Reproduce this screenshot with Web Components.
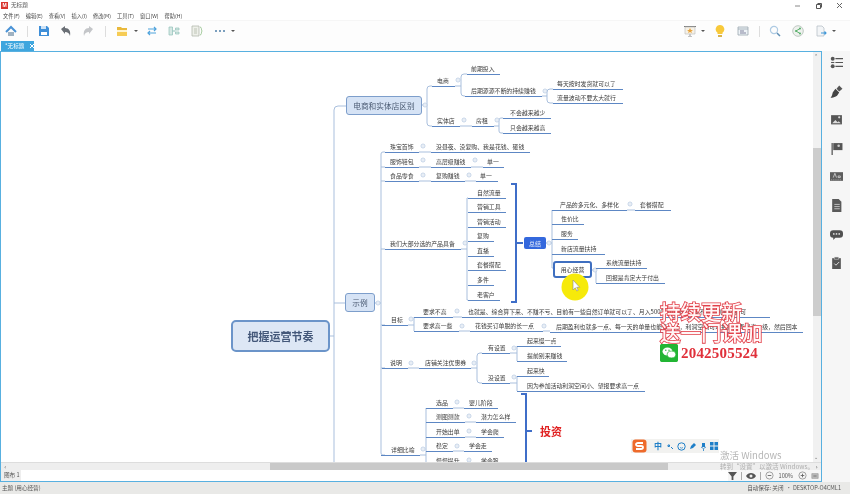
<!DOCTYPE html>
<html lang="zh">
<head>
<meta charset="utf-8">
<title>无标题</title>
<style>
  html, body { margin: 0; height: 494px; overflow: hidden; background: #fff; }
  body { font-family: "Noto Sans CJK SC", "Liberation Sans", sans-serif; color: #444; }
</style>
</head>
<body>
<app-shell>
  <title-bar slot="title">无标题</title-bar>
  <menu-bar slot="menu"></menu-bar>
  <tool-bar slot="tools"></tool-bar>
  <tab-strip slot="tabs">*无标题</tab-strip>
  <editor-pane slot="editor"><mind-canvas></mind-canvas></editor-pane>
  <side-rail slot="rail"></side-rail>
  <status-bar slot="status"></status-bar>
  <screen-overlay slot="overlay"></screen-overlay>
</app-shell>

<script>
const ICONS = {
  home: '<path d="M1 7 6 2l5 5" fill="none" stroke="#4a93d6" stroke-width="2"/><path d="M3 7h6v4H3z" fill="#9fb2c2"/>',
  save: '<path d="M1 1h8l2 2v8H1z" fill="#3f8fd8"/><path d="M3 1h5v3H3z" fill="#cfe3f6"/><path d="M3 7h6v3H3z" fill="#fff"/>',
  undo: '<path d="M1 4 5 1v2c4 0 6 3 5 8-1-3-2-4-5-4v2z" fill="#6a6f75"/>',
  redo: '<path d="M11 4 7 1v2c-4 0-6 3-5 8 1-3 2-4 5-4v2z" fill="#c4c6c9"/>',
  folder: '<path d="M1 2h4l1 1h5v2H1z" fill="#e9b93c"/><path d="M1 5h10v2H1z" fill="#fff4cf"/><path d="M1 7h10v4H1z" fill="#f6cc55"/>',
  swap: '<path d="M2 4h8M8 2l2 2-2 2M10 8H2M4 6 2 8l2 2" fill="none" stroke="#4fa3dc" stroke-width="1.200"/>',
  map: '<path d="M1 2h3.500v8H1zM7.500 3H11v2H7.500zM7.500 7H11v2H7.500z" fill="#d6e8e4" stroke="#8fc0b8" stroke-width=".7"/><path d="M4.500 6h3" stroke="#8fc0b8"/>',
  sheet: '<path d="M1 1h7v10H1z" fill="#eef0ea" stroke="#b3b9ad" stroke-width=".8"/><path d="M3 4h3M3 6h3M3 8h3" stroke="#a9b3a0" stroke-width=".7"/><path d="M9 2c2 0 1 3 2 4-1 1 0 4-2 4" fill="none" stroke="#8fbf86" stroke-width=".8"/>',
  dots: '<circle cx="2" cy="6" r="1" fill="#4f7fa8"/><circle cx="6" cy="6" r="1" fill="#4f7fa8"/><circle cx="10" cy="6" r="1" fill="#4f7fa8"/>',
  show: '<path d="M0 1h12v1H0z" fill="#7d7d7d"/><path d="M1 2h10v7H1z" fill="#f6f1e6" stroke="#b8b8b8" stroke-width=".6"/><path d="M6 3l1 2h2L7.300 6.300 8 8 6 7 4 8l.7-1.700L3 5h2z" fill="#e9a33a"/><path d="M6 9v2M4 12l2-1 2 1" stroke="#8d8d8d" stroke-width=".7" fill="none"/>',
  bulb: '<path d="M6 0a4.300 4.300 0 0 1 2.500 7.800V9h-5V7.800A4.300 4.300 0 0 1 6 0z" fill="#f8c93a"/><path d="M4 10h4v2H4z" fill="#d9b34a"/>',
  note: '<path d="M1 2h10v8H1z" fill="#eef3f7" stroke="#9aa6ae" stroke-width=".8"/><path d="M1 4h10" stroke="#9aa6ae" stroke-width=".8"/><path d="M3 6h4M3 8h6" stroke="#557" stroke-width=".7"/>',
  search: '<circle cx="5" cy="5" r="3.600" fill="none" stroke="#aecbe3" stroke-width="1.200"/><path d="M8 8l3 3" stroke="#5f8fb5" stroke-width="1.500"/>',
  share: '<circle cx="6" cy="6" r="5.300" fill="#eef1ee" stroke="#b9c4bc" stroke-width=".9"/><path d="M8 3.500 4 6l4 2.500" fill="none" stroke="#58b06a"/><circle cx="8" cy="3.500" r="1" fill="#58b06a"/><circle cx="4" cy="6" r="1" fill="#58b06a"/><circle cx="8" cy="8.500" r="1" fill="#58b06a"/>',
  export: '<path d="M2 1h5l2 2v8H2z" fill="#f3f5f7" stroke="#b8c0c8" stroke-width=".8"/><path d="M6 8h5M9.500 6.500 11 8 9.500 9.500" fill="none" stroke="#3f97d8" stroke-width="1.100"/>',
  list: '<circle cx="2.500" cy="2.500" r="1.800" fill="#555"/><circle cx="2.500" cy="9.500" r="1.800" fill="#555"/><path d="M5 2.500h7M5 6h7M5 9.500h7" stroke="#555" stroke-width="1.100"/><path d="M1 6h3" stroke="#555"/>',
  brush: '<path d="M8.500 .5l3 3-3 2.500-2.500-2.500z" fill="#555"/><path d="M5 3.500 8.500 7 6.500 10c-2 1.500-4.500 2-6 1.500C2 10.500 2 9 2.500 7z" fill="#444"/>',
  image: '<path d="M1 2h10v8.500H1z" fill="#555"/><path d="M2 9.500l3-3 2 2 1-1 2 2z" fill="#ddd"/><circle cx="8.500" cy="4" r="1" fill="#ddd"/>',
  flag: '<path d="M2 1v11" stroke="#666" stroke-width="1.300"/><path d="M3 1h8.500v6.500H3z" fill="#555"/><circle cx="8" cy="3.500" r="1.200" fill="#ccc"/>',
  tag: '<path d="M0 2h12v8H0z" fill="#5d5d5d"/><path d="M1 9h10" stroke="#ccc" stroke-width=".5" stroke-dasharray="1 1"/><path d="M3 7l1.500-4L6 7M7.500 5.500h2v1.500h-2z" stroke="#ddd" stroke-width=".7" fill="none"/>',
  doc: '<path d="M2 0h6l2.500 2.500V12H2z" fill="#5a5a5a"/><path d="M4 5h5M4 7h5M4 9h5" stroke="#ddd" stroke-width=".7"/>',
  comment: '<path d="M3 2h6a3 3 0 0 1 3 3v1a3 3 0 0 1-3 3H5l-2 2V9a3 3 0 0 1-3-3V5a3 3 0 0 1 3-3z" fill="#505050"/><circle cx="3.500" cy="5.500" r=".8" fill="#ddd"/><circle cx="6" cy="5.500" r=".8" fill="#ddd"/><circle cx="8.500" cy="5.500" r=".8" fill="#ddd"/>',
  clip: '<path d="M2 2h8v10H2z" fill="#555"/><path d="M4 1h4v2H4z" fill="#555" stroke="#ddd" stroke-width=".5"/><path d="M4 7l1.500 1.500L8.500 5.500" fill="none" stroke="#ddd" stroke-width=".9"/>',
  filter: '<path d="M0 1h10L6 6v4H4V6z" fill="#555"/>',
  eye: '<path d="M0 5c2-4 8-4 10 0-2 4-8 4-10 0z" fill="#555"/><circle cx="5" cy="5" r="1.500" fill="#eee"/>',
  minus: '<circle cx="5" cy="5" r="4" fill="none" stroke="#999"/><path d="M3 5h4" stroke="#666"/>',
  plus: '<circle cx="5" cy="5" r="4" fill="none" stroke="#999"/><path d="M3 5h4M5 3v4" stroke="#666"/>',
  fit: '<path d="M1 2h8v6H1z" fill="#bbb" stroke="#888" stroke-width=".6"/><path d="M3 5h4" stroke="#666"/>'
}

class UiIcon extends HTMLElement {
  connectedCallback() {
    const size = this.getAttribute('size') || 12
    const box = this.getAttribute('box') || 12
    this.attachShadow({ mode: 'open' }).innerHTML = `
      <style>:host { display: block; width: ${size}px; height: ${size}px; flex: none; } svg { display: block; }</style>
      <svg width="${size}" height="${size}" viewBox="0 0 ${box} ${box}">${ICONS[this.getAttribute('name')] || ''}</svg>`
  }
}
customElements.define('ui-icon', UiIcon)

class AppShell extends HTMLElement {
  constructor() {
    super()
    this.attachShadow({ mode: 'open' }).innerHTML = `
      <style>
        :host { display: flex; flex-direction: column; position: relative; width: 850px; height: 494px; overflow: hidden; background: #fdfdfd; filter: blur(.3px); }
        .work { display: flex; height: 431px; }
      </style>
      <slot name="title"></slot>
      <slot name="menu"></slot>
      <slot name="tools"></slot>
      <slot name="tabs"></slot>
      <div class="work"><slot name="editor"></slot><slot name="rail"></slot></div>
      <slot name="status"></slot>
      <slot name="overlay"></slot>`
  }
}
customElements.define('app-shell', AppShell)

class TitleBar extends HTMLElement {
  constructor() {
    super()
    this.attachShadow({ mode: 'open' }).innerHTML = `
      <style>
        :host { display: flex; align-items: center; height: 10px; background: #fff; font-size: 5.600px; color: #555; padding-left: 1px; }
        .logo { width: 7px; height: 7px; background: #d9352f; color: #fff; font: bold 5px/7px "Liberation Sans", sans-serif; text-align: center; margin-right: 3px; }
        .win { margin-left: auto; display: flex; align-items: center; gap: 14px; padding-right: 7px; }
        .win svg { display: block; }
      </style>
      <span class="logo">M</span><slot></slot>
      <div class="win">
        <svg width="7" height="7"><path d="M1 4h5" stroke="#888"/></svg>
        <svg width="7" height="7"><path d="M1.500 2.500h4v4h-4z" fill="none" stroke="#555"/><path d="M2.500 1.500h4v4" fill="none" stroke="#555"/></svg>
        <svg width="7" height="7"><path d="M1 1l5 5M6 1 1 6" stroke="#666"/></svg>
      </div>`
  }
}
customElements.define('title-bar', TitleBar)

class MenuBar extends HTMLElement {
  constructor() {
    super()
    const items = ['文件(F)', '编辑(E)', '查看(V)', '插入(I)', '修改(M)', '工具(T)', '窗口(W)', '帮助(H)']
    this.attachShadow({ mode: 'open' }).innerHTML = `
      <style>
        :host { display: flex; align-items: center; gap: 6px; height: 10px; padding-left: 3px; background: #fff; font-size: 5.200px; color: #444; white-space: nowrap; }
      </style>
      ${items.map(t => `<span>${t}</span>`).join('')}`
  }
}
customElements.define('menu-bar', MenuBar)

class ToolBar extends HTMLElement {
  constructor() {
    super()
    const ic = (n, m) => `<ui-icon name="${n}" style="margin-left:${m}px"></ui-icon>`
    const sep = m => `<i class="sep" style="margin-left:${m}px"></i>`
    const caret = m => `<i class="caret" style="margin-left:${m}px"></i>`
    this.attachShadow({ mode: 'open' }).innerHTML = `
      <style>
        :host { display: flex; align-items: center; height: 21px; padding: 0 12px 0 5px; background: #fdfdfd; border-top: 1px solid #f6f6f6; box-sizing: border-box; }
        .sep { width: 1px; height: 11px; background: #ddd; flex: none; }
        .caret { width: 0; height: 0; border: 2px solid transparent; border-top: 2.500px solid #555; border-bottom: 0; flex: none; box-sizing: content-box; margin-right: 2px; }
        .right { margin-left: auto; display: flex; align-items: center; }
      </style>
      ${ic('home', 0)}${sep(10)}${ic('save', 10)}${ic('undo', 10)}${ic('redo', 10)}${sep(11)}${ic('folder', 10)}${caret(6)}${ic('swap', 6)}${ic('map', 10)}${ic('sheet', 11)}${ic('dots', 11)}${caret(5)}
      <div class="right">
        ${ic('show', 0)}${caret(5)}${ic('bulb', 7)}${ic('note', 11)}${sep(10)}${ic('search', 9)}${ic('share', 11)}${ic('export', 11)}${caret(5)}
      </div>`
  }
}
customElements.define('tool-bar', ToolBar)

class TabStrip extends HTMLElement {
  constructor() {
    super()
    this.attachShadow({ mode: 'open' }).innerHTML = `
      <style>
        :host { display: flex; align-items: flex-end; height: 10px; padding-left: 1px; background: #fdfdfd; }
        .tab { display: flex; align-items: center; width: 33px; height: 10px; box-sizing: border-box; padding-left: 4px; background: #3fa6de; color: #fff; font-size: 5.600px; line-height: 10px; white-space: nowrap; }
        svg { margin-left: 5px; flex: none; }
      </style>
      <div class="tab"><slot></slot><svg width="6" height="6"><path d="M1 1l4 4M5 1 1 5" stroke="#fff"/></svg></div>`
  }
}
customElements.define('tab-strip', TabStrip)

class EditorPane extends HTMLElement {
  constructor() {
    super()
    this.attachShadow({ mode: 'open' }).innerHTML = `
      <style>
        :host { display: flex; flex-direction: column; width: 822px; height: 431px; box-sizing: border-box; border: solid #58b0e0; border-width: 1px 1.500px 1.500px 1.500px; background: #fff; font-size: 5.600px; }
        .top { display: flex; height: 410px; }
        .canvas { flex: 1; min-width: 0; position: relative; overflow: hidden; }
        .vbar { width: 8px; position: relative; background: #f1f1f1; }
        .vbar b { position: absolute; left: 0; right: 0; top: 96px; height: 168px; background: #cdcdcd; }
        .vbar i { position: absolute; left: 1px; font: normal 5px/6px "DejaVu Sans", sans-serif; color: #666; }
        .hbar { display: flex; height: 8px; background: #eee; position: relative; border-top: 1px solid #ddd; box-sizing: border-box; }
        .hbar b { margin-left: 269px; width: 398px; background: #c9c9c9; }
        .hbar i { position: absolute; font: normal 6px/7px "DejaVu Sans", sans-serif; color: #555; }
        .sheets { display: flex; align-items: center; height: 11px; padding-left: 2px; background: #fff; color: #555; }
        .name { width: 17px; height: 100%; line-height: 11px; background: #eee; margin-left: -2px; padding-left: 3px; flex: none; box-sizing: content-box; }
        .tools { margin-left: auto; display: flex; align-items: center; background: #f6f6f6; height: 100%; padding: 0 2px 0 0; }
        .tools s { text-decoration: none; }
        .tools i { width: 1px; height: 8px; background: #aaa; margin: 0 4px; }
      </style>
      <div class="top">
        <div class="canvas"><slot></slot></div>
        <div class="vbar"><i style="top:1px">⌃</i><b></b><i style="bottom:2px">⌄</i></div>
      </div>
      <div class="hbar"><i style="left:3px;top:0">‹</i><b></b><i style="right:3px;top:0">›</i></div>
      <div class="sheets">
        <span class="name">图布 1</span>
        <div class="tools">
          <ui-icon name="filter" size="9" box="10"></ui-icon><i></i><ui-icon name="eye" size="10" box="10"></ui-icon><i></i>
          <ui-icon name="minus" size="9" box="10"></ui-icon><s style="margin:0 5px">100%</s><ui-icon name="plus" size="9" box="10"></ui-icon><ui-icon name="fit" size="8" box="10" style="margin-left:4px"></ui-icon>
        </div>
      </div>`
  }
}
customElements.define('editor-pane', EditorPane)

class SideRail extends HTMLElement {
  constructor() {
    super()
    const names = ['list', 'brush', 'image', 'flag', 'tag', 'doc', 'comment', 'clip']
    this.attachShadow({ mode: 'open' }).innerHTML = `
      <style>
        :host { display: flex; flex-direction: column; align-items: center; gap: 15.600px; width: 28px; padding-top: 5px; box-sizing: border-box; background: #f6f6f6; }
      </style>
      ${names.map(n => `<ui-icon name="${n}" size="13"></ui-icon>`).join('')}`
  }
}
customElements.define('side-rail', SideRail)

class StatusBar extends HTMLElement {
  constructor() {
    super()
    this.attachShadow({ mode: 'open' }).innerHTML = `
      <style>
        :host { display: flex; align-items: center; justify-content: space-between; height: 12px; padding: 0 9px 0 2px; background: #e9e9e7; font-size: 5.600px; color: #555; }
      </style>
      <span>主题 (用心经营)</span><span>自动保存: 关闭 &nbsp;• DESKTOP-O4CML1</span>`
  }
}
customElements.define('status-bar', StatusBar)

// one topic of the map: l/r = underline ends, u = underline y, p = text inset
class MindNode extends HTMLElement {
  connectedCallback() {
    const n = k => Number(this.getAttribute(k))
    const kind = this.getAttribute('kind') || 'line'
    let css
    if (kind === 'line') {
      css = `:host { position: absolute; left: ${n('l') - 1}px; top: ${n('u') - 63}px; width: ${n('r') - n('l')}px; height: 11px; box-sizing: content-box;
        border-bottom: 1.200px solid #5d87c4; padding: 0; font-size: 5.900px; line-height: 11px; color: #3a3a3a; white-space: nowrap; }
        span { display: block; padding-left: ${this.getAttribute('p') || 5}px; }`
    } else {
      const skins = {
        root: 'background:#dde7f5;border:2px solid #6b94c9;border-radius:5px;font-size:11px;font-weight:700;color:#44587a;',
        main: 'background:#d6e3f5;border:1px solid #7d9ecb;border-radius:3px;font-size:7.700px;color:#4a5a72;',
        accent: 'background:#3468dd;border-radius:2px;font-size:6px;color:#e8eefc;',
        selected: 'background:#fff;border:2px solid #3f6fc0;border-radius:3px;font-size:5.900px;color:#3a3a3a;'
      }
      css = `:host { position: absolute; left: ${n('x') - 1}px; top: ${n('y') - 52}px; width: ${n('w')}px; height: ${n('h')}px; box-sizing: border-box;
        display: flex; align-items: center; justify-content: center; white-space: nowrap; ${skins[kind]} }`
    }
    this.attachShadow({ mode: 'open' }).innerHTML = `<style>${css}</style><span><slot></slot></span>`
  }
}
customElements.define('mind-node', MindNode)

const LINES = [
  [467,74,500,'前期投入',4], [432,86,455,'电商',5], [465,96,542,'后期源源不断的持续赚钱',6],
  [553,89,623,'每天按时发货就可以了',4], [553,103,623,'流量波动不要太大就行',4],
  [432,126,460,'实体店',5], [472,126,494,'房租',4], [503,118,551,'不会越来越少',7], [503,133,551,'只会越来越高',7],
  [385,152,419,'珠宝首饰',5], [431,152,530,'没昼夜、没复购、我是花钱、砸钱',5],
  [385,167,419,'服饰鞋包',5], [431,167,471,'高层级赚钱',5], [483,167,504,'单一',4],
  [385,181,419,'食品零食',5], [431,181,465,'复购赚钱',5], [476,181,498,'单一',4],
  [385,249,461,'我们大部分选的产品具备',5],
  [468,198,506,'自然流量',9], [468,212,506,'营销工具',9], [468,227,506,'营销活动',9], [468,241,494,'复购',9],
  [468,256,494,'直播',9], [468,270,506,'套餐搭配',9], [468,285,494,'多件',9], [468,300,500,'老客户',9],
  [552,210,627,'产品的多元化、多样化',8], [635,210,671,'套餐搭配',5], [552,224,584,'性价比',9],
  [552,239,578,'服务',9], [552,254,605,'新店流量扶持',9],
  [596,268,647,'系统流量扶持',10], [596,283,665,'回报是肯定大于付出',10],
  [382,325,408,'目标',9], [414,317,453,'要求不高',9], [414,331,459,'要求高一些',9],
  [462,317,770,'也就是、综合算下来、不赚不亏、目前有一些自然订单就可以了、月入5000（小目标）差不多做到超级即可',6],
  [470,331,543,'花钱买订单脱的长一点',5],
  [550,332,803,'后期盈利也就多一点、每一天的单量也能多一点，利润空间可以把质量再提高一级，然后回本',6],
  [382,368,408,'说明',8], [419,368,471,'店铺关注优惠券',6],
  [482,353,510,'有设置',6], [482,383,510,'没设置',6],
  [517,346,561,'起来慢一点',10], [517,361,567,'提前别来赚钱',10], [517,376,549,'起来快',10],
  [517,391,645,'因为参加活动利润空间小、望报要求高一点',10],
  [381,455,420,'详细比喻',10],
  [426,408,453,'选品',10], [464,408,498,'婴儿阶段',5],
  [426,422,465,'测图测款',10], [476,422,516,'潜力怎么样',5],
  [426,437,465,'开始出单',10], [476,437,504,'学会爬',5],
  [426,451,453,'稳定',10], [464,451,492,'学会走',5],
  [426,466,465,'慢慢提升',10], [476,466,504,'学会跑',5]
]

const LINKS = [
  'M330 336H334', 'M334 470V110Q334 106 338 106H346', 'M334 303H345',
  'M422 105H427', 'M432 86H430Q427 86 427 89V123Q427 126 430 126H432',
  'M455 86H461', 'M467 74H464Q461 74 461 77V93Q461 96 464 96H465',
  'M542 96H547', 'M553 89H550Q547 89 547 92V100Q547 103 550 103H553',
  'M460 126H472', 'M494 126H499', 'M503 118H501Q499 118 499 120V131Q499 133 501 133H503',
  'M375 303H381', 'M385 152H383Q381 152 381 154V453Q381 455 383 455H385',
  'M381 167H385', 'M381 181H385', 'M381 249H385', 'M381 325H385', 'M381 368H385',
  'M419 152H431', 'M419 167H431', 'M471 167H483', 'M419 181H431', 'M465 181H476',
  'M461 249H467', 'M468 198H467V300H468',
  'M546 243H552', 'M552 210V254', 'M552 254V268H553', 'M627 210H635',
  'M592 270H596', 'M596 268V283',
  'M408 325H414', 'M414 317V331', 'M453 317H462', 'M459 331H470', 'M543 331H550',
  'M408 368H419', 'M471 368H477', 'M482 353H480Q477 353 477 356V380Q477 383 480 383H482',
  'M510 353H517', 'M517 346V361', 'M510 383H517', 'M517 376V391',
  'M420 455H426', 'M426 408V470', 'M453 408H464', 'M465 422H476', 'M465 437H476', 'M453 451H464'
]

const DOTS = [
  [425,105],[458,80],[545,91],[464,120],[497,120],[423,146],[423,160],[475,160],[423,175],[469,175],
  [465,243],[549,243],[595,270],[630,204],[378,303],[411,319],[457,311],[462,326],[544,326],
  [411,363],[474,363],[514,348],[514,377],[457,402],[469,416],[469,431],[457,446],[469,460],[423,449]
]

class MindCanvas extends HTMLElement {
  constructor() {
    super()
    const dots = DOTS.map(([x, y]) => `<circle cx="${x}" cy="${y}" r="2" fill="#fff" stroke="#b4c6df" stroke-width=".8"/><path d="M${x - 1} ${y}h2" stroke="#b4c6df" stroke-width=".6"/>`).join('')
    const rows = LINES.map(([l, u, r, t, p]) => `<mind-node l="${l}" u="${u}" r="${r}" p="${p}">${t}</mind-node>`).join('')
    this.attachShadow({ mode: 'open' }).innerHTML = `
      <style>
        :host { display: block; position: absolute; inset: 0; }
        .links { position: absolute; left: -1px; top: -52px; }
        .invest { position: absolute; left: 539px; top: 370px; font-size: 11px; font-weight: 700; color: #e02020; line-height: 18px; }
      </style>
      <svg class="links" width="850" height="494">
        <path d="${LINKS.join('')}" fill="none" stroke="#a9bfdd" stroke-width="1"/>
        <path d="M511 184H516V302H511M516 243H523M521 394H526V470M526 431H532" fill="none" stroke="#3f6ec8" stroke-width="2"/>
        ${dots}
      </svg>
      ${rows}
      <mind-node kind="root" x="231" y="320" w="99" h="32">把握运营节奏</mind-node>
      <mind-node kind="main" x="346" y="96" w="76" h="19">电商和实体店区别</mind-node>
      <mind-node kind="main" x="345" y="293" w="30" h="19">示例</mind-node>
      <mind-node kind="accent" x="524" y="237" w="22" h="12">总结</mind-node>
      <mind-node kind="selected" x="553" y="261" w="39" h="17">用心经营</mind-node>
      <span class="invest">投资</span>
      <svg class="links" width="850" height="494">
        <circle cx="575" cy="287" r="13.500" fill="#f6ea0a"/>
        <path d="M573 280v10l2.300-2.200 1.500 3.200 1.400-.7-1.500-3h3z" fill="#fff" stroke="#888" stroke-width=".6"/>
      </svg>`
  }
}
customElements.define('mind-canvas', MindCanvas)

class ScreenOverlay extends HTMLElement {
  constructor() {
    super()
    this.attachShadow({ mode: 'open' }).innerHTML = `
      <style>
        :host { display: block; position: absolute; inset: 0; pointer-events: none; }
        .promo { position: absolute; left: 660px; top: 301px; display: flex; flex-direction: column; }
        .big { font-size: 20.500px; line-height: 20.500px; font-weight: 500; color: #fff6f6; -webkit-text-stroke: 1.700px #e2404a; paint-order: stroke fill; white-space: nowrap; }
        .num { display: flex; align-items: center; gap: 3px; margin-top: 2px; font: 700 15px/18px "Liberation Serif", serif; color: #e0303a; letter-spacing: .2px; }
        .wx { width: 18px; height: 18px; border-radius: 2px; background: #22b534; display: block; }
        .ime { position: absolute; left: 631px; top: 439px; width: 88px; height: 14px; display: flex; align-items: center; gap: 3px; background: #f2f2f0; box-sizing: border-box; padding-left: 1px; }
        .ime svg { display: block; flex: none; }
        .ime b { font-size: 8px; color: #1f7fc8; margin: 0 2px 0 4px; line-height: 10px; }
        .act { position: absolute; color: rgba(120,120,120,.55); white-space: nowrap; }
      </style>
      <div class="promo">
        <div class="big">持续更新</div>
        <div class="big">送一门课加</div>
        <div class="num">
          <svg class="wx" viewBox="0 0 18 18"><rect width="18" height="18" rx="2" fill="#22b534"/><ellipse cx="7.500" cy="7.500" rx="5" ry="4" fill="#fff"/><ellipse cx="11.500" cy="10.500" rx="4.300" ry="3.400" fill="#fff" stroke="#22b534" stroke-width=".7"/><circle cx="5.800" cy="6.300" r=".7" fill="#22b534"/><circle cx="9" cy="6.300" r=".7" fill="#22b534"/></svg>
          2042505524
        </div>
      </div>
      <div class="ime">
        <svg width="15" height="14" viewBox="0 0 15 14"><rect x=".5" y=".5" width="14" height="13" rx="3" fill="#ee6a2b"/><path d="M11 4H6Q4 4 4 5.500T6 7h3q2 0 2 1.500T9 10H4" fill="none" stroke="#fff" stroke-width="1.800"/></svg>
        <b>中</b>
        <svg width="7" height="7"><path d="M1 2h1.500v1.500H1zM4 4l2 2" stroke="#1f7fc8" fill="none"/></svg>
        <svg width="9" height="9"><circle cx="4.500" cy="4.500" r="3.700" fill="none" stroke="#1f7fc8"/><path d="M3 5.500q1.500 1.300 3 0" fill="none" stroke="#1f7fc8" stroke-width=".7"/></svg>
        <svg width="8" height="8"><path d="M1 7l1-3 3-3 2 2-3 3z" fill="#1f7fc8"/></svg>
        <svg width="7" height="9"><path d="M2 1h3v4H2z" fill="#1f7fc8"/><path d="M1 5q2.500 3 5 0M3.500 7v2" stroke="#1f7fc8" fill="none" stroke-width=".8"/></svg>
        <svg width="8" height="8"><path d="M0 0h3.500v3.500H0zM4.500 0H8v3.500H4.500zM0 4.500h3.500V8H0zM4.500 4.500H8V8H4.500z" fill="#1f7fc8"/></svg>
      </div>
      <div class="act" style="left:720px;top:449px;font-size:9.500px;line-height:12px">激活 Windows</div>
      <div class="act" style="left:720px;top:461px;font-size:6.500px;line-height:10px">转到“设置”以激活 Windows。</div>`
  }
}
customElements.define('screen-overlay', ScreenOverlay)
</script>
</body>
</html>
